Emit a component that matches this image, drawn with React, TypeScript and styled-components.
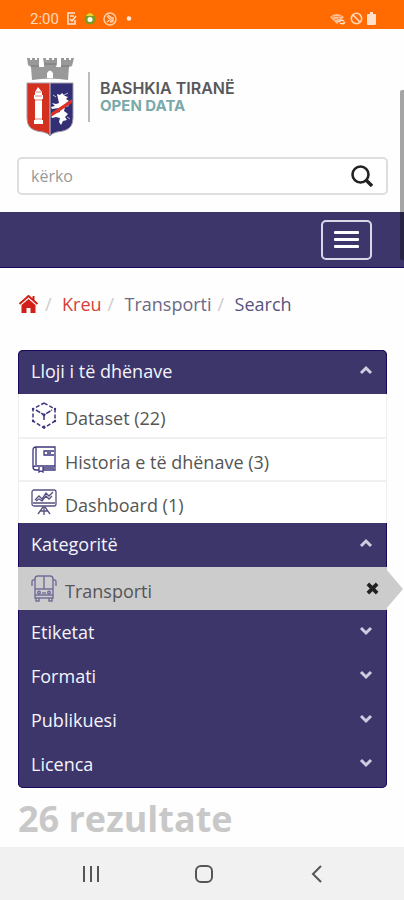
import React from "react";
import styled, { createGlobalStyle } from "styled-components";

const navy = "#3c366b";
const edge = "#1b0a5c";

const GlobalStyle = createGlobalStyle`
  *, *::before, *::after { box-sizing: border-box; }
  body {
    margin: 0;
    background: #fefefe;
    color: #555;
    font-family: "Open Sans", "Noto Sans", sans-serif;
  }
  button { font: inherit; cursor: pointer; }
  svg { display: block; flex: none; }
`;

const Page = styled.div`
  position: relative;
  display: flex;
  flex-direction: column;
  min-height: 100vh;
`;

const StatusBar = styled.div`
  display: flex;
  align-items: center;
  justify-content: space-between;
  height: 29px;
  padding: 8px 28px 0 30px;
  background: #ff6b00;
  color: #ffd9bd;
  font: 15px/20px Roboto, sans-serif;
`;

const StatusGroup = styled.div<{ $gap: number }>`
  display: flex;
  align-items: center;
  gap: ${(p) => p.$gap}px;
`;

const ScrollThumb = styled.div`
  position: absolute;
  top: 90px;
  right: 0;
  width: 4px;
  height: 170px;
  border-radius: 2px 0 0 2px;
  background: rgba(0, 0, 0, 0.35);
`;

const Header = styled.header`
  padding: 27px 16px 17px 17px;
`;

const Brand = styled.a`
  display: flex;
  align-items: center;
  width: max-content;
  margin-bottom: 21px;
  padding-left: 9px;
  text-decoration: none;
`;

const BrandText = styled.span`
  display: flex;
  flex-direction: column;
  justify-content: center;
  height: 50px;
  margin: 2px 0 0 14px;
  padding-left: 10px;
  border-left: 2px solid #bcbcbe;
  font: 600 16px/18px Inter, sans-serif;
  color: #58585a;
`;

const BrandSub = styled.span`
  font-size: 15px;
  font-weight: 700;
  color: #79a9a8;
`;

const SearchForm = styled.form`
  display: flex;
  align-items: center;
  height: 38px;
  padding: 0 13px 0 12px;
  border: 2px solid #dedede;
  border-radius: 5px;
  background: #fff;
`;

const SearchInput = styled.input`
  flex: 1;
  min-width: 0;
  padding: 0;
  border: 0;
  outline: 0;
  background: none;
  color: #555;
  font: 16px/20px "Open Sans", "Noto Sans", sans-serif;
  &::placeholder { color: #999; opacity: 1; }
`;

const IconButton = styled.button`
  display: flex;
  align-items: center;
  justify-content: center;
  padding: 0;
  border: 0;
  background: none;
  color: #222;
`;

const NavBar = styled.nav`
  display: flex;
  align-items: center;
  justify-content: flex-end;
  height: 56px;
  padding-right: 32px;
  background: ${navy};
  border-bottom: 1px solid ${edge};
`;

const MenuButton = styled.button`
  display: flex;
  flex-direction: column;
  align-items: center;
  justify-content: center;
  gap: 4px;
  width: 51px;
  height: 40px;
  padding: 0;
  border: 2px solid #d9d7e8;
  border-radius: 5px;
  background: none;
`;

const MenuLine = styled.span`
  width: 25px;
  height: 3px;
  border-radius: 1px;
  background: #fff;
`;

const Main = styled.main`
  flex: 1;
  padding: 22px 17px 0 18px;
`;

const Crumbs = styled.ol`
  display: flex;
  align-items: center;
  margin: 0 0 32px;
  padding: 0;
  list-style: none;
  font-size: 18px;
  line-height: 28px;
`;

const Crumb = styled.li`
  display: flex;
  align-items: center;
  & + &::before {
    content: "/";
    width: 17px;
    margin-left: 6px;
    color: #ccc;
  }
`;

const CrumbLink = styled.a<{ $tone: string }>`
  color: ${(p) => p.$tone};
  text-decoration: none;
`;

const Panel = styled.div`
  padding-bottom: 2px;
  border-radius: 5px;
  background: ${navy};
  box-shadow: inset 0 0 0 1px ${edge};
`;

const FacetButton = styled.button`
  display: flex;
  align-items: center;
  justify-content: space-between;
  width: 100%;
  height: 44px;
  padding: 0 14px 0 13px;
  border: 0;
  background: none;
  color: #f5f4fb;
  font-size: 18px;
  line-height: 24px;
  text-align: left;
  &[aria-expanded="true"] { padding-bottom: 2px; }
  svg { margin-bottom: 2px; }
`;

const FacetList = styled.ul`
  margin: 0;
  padding: 0;
  list-style: none;
`;

const FacetItem = styled.li<{ $active?: boolean }>`
  position: relative;
  display: flex;
  align-items: center;
  justify-content: space-between;
  height: 43px;
  padding: 0 7px 0 12px;
  background: ${(p) => (p.$active ? "#ccc" : "#fff")};
  border-left: 1px solid ${(p) => (p.$active ? "#ccc" : "#eee")};
  border-right: 1px solid ${(p) => (p.$active ? "#ccc" : "#eee")};
  & + & { border-top: 2px solid #f0f0f0; }
  &::after {
    content: "";
    display: ${(p) => (p.$active ? "block" : "none")};
    position: absolute;
    top: 2px;
    left: 100%;
    border: 20px solid transparent;
    border-left: 17px solid #ccc;
    border-right: 0;
  }
`;

const FacetLink = styled.a`
  display: flex;
  align-items: center;
  gap: 8px;
  padding-top: 4px;
  color: #555;
  font-size: 18px;
  line-height: 26px;
  text-decoration: none;
  svg { margin-bottom: 4px; }
`;

const Results = styled.h1`
  margin: 6px 0 0;
  color: #c8c8c8;
  font-size: 36px;
  line-height: 50px;
  font-weight: 700;
`;

const SystemNav = styled.nav`
  display: grid;
  grid-template-columns: repeat(3, 1fr);
  height: 53px;
  padding: 0 30px 0 34px;
  background: #f1f1f1;
`;

function Crest() {
  return (
    <svg width="48" height="80" viewBox="0 0 48 80" aria-hidden="true">
      <path d="M1 2h3v2h2V2h3v2h2V2h2v9h5V8L17 2h3v2h3V2h3v2h2V2h3v6l-1 3h5V2h3v2h2V2h3v2h2V2h3l-2 8-3 1-1 13q-18-3-36 0L5 11 2 9Z" fill="#999" />
      <path d="M5 10h8m22 0h8M18 8h12" stroke="#777" strokeWidth="1" />
      <path d="M21 22v-5q3-5 6 0v5Z" fill="#fff" />
      <path d="M1 27h23v53q-2-3-7-4-11-1-14-6-2-3-2-8Z" fill="#d3301f" />
      <path d="M24 27h23v35q0 5-2 8-3 5-14 6-5 1-7 4Z" fill="#332f75" />
      <path d="M1 27h46v35q0 5-2 8-3 5-14 6-5 1-7 4-2-3-7-4-11-1-14-6-2-3-2-8Z" fill="none" stroke="#a69aa9" />
      <path d="M24 27v52" stroke="#ccc" />
      <path d="m12 31 4 5v3h1v4h-1v21h1v4H8v-4h1V43H8v-4h1v-3Z" fill="#fff" />
      <path d="M10 36h5M9 40h7M9 44h7M9 63h7" stroke="#d98478" />
      <path d="m31 38 3 1 2-2 3 3 3 1-2 2 3 2-3 2 3 3-4 1-1 4 4 3-3 3 2 3-4 1-2 4-2-3 1-4-4-1-4 1-1-2 5-3 4-1-1-4-7 1-1-2 4-1-3-3 4 1 3-1Z" fill="#fff" />
      <path d="m25 57 21-14v4L25 61Z" fill="#dd3026" />
      <path d="m27 39 3 2M38 39l4-2M41 61l3 2" stroke="#b8bdd8" />
    </svg>
  );
}

function NoteIcon() {
  return (
    <svg width="11" height="13" viewBox="0 0 11 13" fill="none" stroke="#ffe0ca" strokeWidth="1.6" aria-hidden="true">
      <path d="M9 1H2v11h7V8M4 4h4M4 7l2 2 4-5" />
    </svg>
  );
}

function AppDotIcon() {
  return (
    <svg width="12" height="14" viewBox="0 0 12 14" aria-hidden="true">
      <circle cx="6" cy="7" r="5.5" fill="#7b9c20" />
      <path d="M2 4q4-6 8 0Z" fill="#e7d22b" />
      <circle cx="6" cy="7.5" r="2.5" fill="#fff" />
    </svg>
  );
}

function BadgeIcon() {
  return (
    <svg width="14" height="14" viewBox="0 0 14 14" fill="none" stroke="#ffd0ad" strokeWidth="1.4" aria-hidden="true">
      <circle cx="7" cy="7" r="6" />
      <path d="m4 4 6 6M5 3l4 3-5 4M10 5v4l-3 1" />
    </svg>
  );
}

function StatusDot() {
  return (
    <svg width="9" height="5" viewBox="0 0 9 5" aria-hidden="true">
      <circle cx="5" cy="2.5" r="2.3" fill="#ffe8d8" />
    </svg>
  );
}

function WifiIcon() {
  return (
    <svg width="16" height="12" viewBox="0 0 16 12" aria-hidden="true">
      <path d="M0 4q7-6 14 0l-7 7Z" fill="#ffc199" />
      <path d="m2 4 10-1M4 7l6-2" stroke="#ff8735" />
      <path d="M9 9q2-3 5-1m1 1q-2 3-5 1" fill="none" stroke="#ffe0ca" strokeWidth="1.5" />
    </svg>
  );
}

function BlockIcon() {
  return (
    <svg width="13" height="13" viewBox="0 0 13 13" fill="none" stroke="#ffd6b8" strokeWidth="1.6" aria-hidden="true">
      <circle cx="6.5" cy="6.5" r="5.2" />
      <path d="m3 3 7 7" />
    </svg>
  );
}

function BatteryIcon() {
  return (
    <svg width="9" height="13" viewBox="0 0 9 13" fill="#ffe0ca" aria-hidden="true">
      <path d="M3 0h3v2h2q1 0 1 1v9q0 1-1 1H1q-1 0-1-1V3q0-1 1-1h2Z" />
    </svg>
  );
}

function SearchIcon() {
  return (
    <svg width="22" height="22" viewBox="0 0 22 22" fill="none" stroke="#222" aria-hidden="true">
      <circle cx="9.5" cy="9.5" r="8" strokeWidth="2.6" />
      <path d="m15 15 6 6" strokeWidth="3.4" />
    </svg>
  );
}

function HomeIcon() {
  return (
    <svg width="21" height="18" viewBox="0 0 20 18" aria-hidden="true">
      <path d="m1 9 9-8 9 8M15 1v5" fill="none" stroke="#d21f17" strokeWidth="2" />
      <path d="m3 10 7-6 7 6v8h-5v-5H8v5H3Z" fill="#d21f17" />
    </svg>
  );
}

function Chevron({ up }: { up?: boolean }) {
  return (
    <svg width="14" height="10" viewBox="0 0 14 10" fill="none" stroke="#cfccdf" strokeWidth="3" aria-hidden="true">
      <path d={up ? "m2 8 5-5 5 5" : "m2 2 5 5 5-5"} />
    </svg>
  );
}

function CubeIcon() {
  return (
    <svg width="26" height="27" viewBox="0 0 26 27" fill="none" stroke="#3c367d" strokeWidth="1.5" aria-hidden="true">
      <path d="m13 1 11 6v12l-11 7-11-7V7Z" strokeDasharray="4 2" />
      <path d="m5 8 8 5 8-5M13 13v6" strokeDasharray="5 1" />
      <g fill="#3c367d" stroke="none">
        <circle cx="2" cy="7" r="1.2" />
        <circle cx="24" cy="7" r="1.2" />
        <circle cx="13" cy="13" r="1.4" />
        <circle cx="2" cy="19" r="1.2" />
        <circle cx="24" cy="19" r="1.2" />
        <circle cx="13" cy="25" r="1.4" />
      </g>
    </svg>
  );
}

function BookIcon() {
  return (
    <svg width="26" height="27" viewBox="0 0 26 27" fill="none" stroke="#3c367d" strokeWidth="1.3" aria-hidden="true">
      <path d="M24 20V1H5Q2 1 2 4v17q0 3 3 3h3M24 20H5q-3 0-3 2M5 1v18M24 20v4H12" />
      <path d="M23 5H13v4h10M16 7h4M8 21v5l2-1 2 1v-5M12 22h11" />
    </svg>
  );
}

function BoardIcon() {
  return (
    <svg width="26" height="27" viewBox="0 0 26 27" fill="none" stroke="#55517f" strokeWidth="1.3" aria-hidden="true">
      <rect x="1" y="1" width="24" height="16" rx="2" />
      <path d="M2 14h22M13 17v9M12 18l-5 7M14 18l5 7M9 22h8" />
      <path d="m4 11 4-4 3 3 4-6 3 3 4-4M5 12l3-2 3 2 4-5 3 3 3-3" />
    </svg>
  );
}

function BusIcon() {
  return (
    <svg width="26" height="27" viewBox="0 0 26 27" fill="none" stroke="#716d98" strokeWidth="1.4" aria-hidden="true">
      <path d="M4 4q0-3 3-3h12q3 0 3 3v19H4ZM4 14h18M13 1v13M4 20h18" />
      <path d="M4 5H2Q1 5 1 7v4M22 5h2q1 0 1 2v4M5 23v3h3v-3M18 23v3h3v-3" />
      <circle cx="8" cy="17.5" r="1.3" />
      <circle cx="18" cy="17.5" r="1.3" />
      <path d="M11 18h4" />
    </svg>
  );
}

function CloseIcon() {
  return (
    <svg width="13" height="13" viewBox="0 0 14 14" stroke="#222" strokeWidth="4" aria-hidden="true">
      <path d="m2 2 10 10M12 2 2 12" />
    </svg>
  );
}

function RecentsIcon() {
  return (
    <svg width="18" height="18" viewBox="0 0 18 18" stroke="#555" strokeWidth="2" aria-hidden="true">
      <path d="M2 1v16M9 1v16M16 1v16" />
    </svg>
  );
}

function SystemHomeIcon() {
  return (
    <svg width="20" height="20" viewBox="0 0 20 20" fill="none" stroke="#555" strokeWidth="2" aria-hidden="true">
      <rect x="2" y="2" width="16" height="16" rx="5" />
    </svg>
  );
}

function BackIcon() {
  return (
    <svg width="12" height="18" viewBox="0 0 12 18" fill="none" stroke="#555" strokeWidth="2" aria-hidden="true">
      <path d="M10 1 2 9l8 8" />
    </svg>
  );
}

const RemoveButton = styled(IconButton)`
  width: 13px;
  margin-right: 0;
`;

const dataTypes = [
  { label: "Dataset (22)", icon: <CubeIcon /> },
  { label: "Historia e të dhënave (3)", icon: <BookIcon /> },
  { label: "Dashboard (1)", icon: <BoardIcon /> },
];

const closedFacets = ["Etiketat", "Formati", "Publikuesi", "Licenca"];

function Facet({ title, open, children }: { title: string; open?: boolean; children?: React.ReactNode }) {
  return (
    <section>
      <FacetButton type="button" aria-expanded={!!open}>
        {title}
        <Chevron up={open} />
      </FacetButton>
      {children && <FacetList>{children}</FacetList>}
    </section>
  );
}

export default function App() {
  return (
    <>
      <GlobalStyle />
      <Page>
        <StatusBar>
          <StatusGroup $gap={7}>
            <span>2:00</span>
            <NoteIcon />
            <AppDotIcon />
            <BadgeIcon />
            <StatusDot />
          </StatusGroup>
          <StatusGroup $gap={4}>
            <WifiIcon />
            <BlockIcon />
            <BatteryIcon />
          </StatusGroup>
        </StatusBar>
        <Header>
          <Brand href="#">
            <Crest />
            <BrandText>
              BASHKIA TIRANË
              <BrandSub>OPEN DATA</BrandSub>
            </BrandText>
          </Brand>
          <SearchForm role="search" onSubmit={(e) => e.preventDefault()}>
            <SearchInput type="text" placeholder="kërko" aria-label="kërko" />
            <IconButton type="submit" aria-label="Kërko">
              <SearchIcon />
            </IconButton>
          </SearchForm>
        </Header>
        <NavBar>
          <MenuButton type="button" aria-label="Menu">
            <MenuLine />
            <MenuLine />
            <MenuLine />
          </MenuButton>
        </NavBar>
        <Main>
          <Crumbs>
            <Crumb>
              <CrumbLink href="#" $tone="#d21f17" aria-label="Home">
                <HomeIcon />
              </CrumbLink>
            </Crumb>
            <Crumb>
              <CrumbLink href="#" $tone="#d6403a">Kreu</CrumbLink>
            </Crumb>
            <Crumb>
              <CrumbLink href="#" $tone="#6c6986">Transporti</CrumbLink>
            </Crumb>
            <Crumb>
              <CrumbLink href="#" $tone="#58537f">Search</CrumbLink>
            </Crumb>
          </Crumbs>
          <Panel>
            <Facet title="Lloji i të dhënave" open>
              {dataTypes.map((item) => (
                <FacetItem key={item.label}>
                  <FacetLink href="#">
                    {item.icon}
                    {item.label}
                  </FacetLink>
                </FacetItem>
              ))}
            </Facet>
            <Facet title="Kategoritë" open>
              <FacetItem $active>
                <FacetLink href="#">
                  <BusIcon />
                  Transporti
                </FacetLink>
                <RemoveButton type="button" aria-label="Hiq Transporti">
                  <CloseIcon />
                </RemoveButton>
              </FacetItem>
            </Facet>
            {closedFacets.map((title) => (
              <Facet key={title} title={title} />
            ))}
          </Panel>
          <Results>26 rezultate</Results>
        </Main>
        <SystemNav>
          <IconButton type="button" aria-label="Recents">
            <RecentsIcon />
          </IconButton>
          <IconButton type="button" aria-label="Home screen">
            <SystemHomeIcon />
          </IconButton>
          <IconButton type="button" aria-label="Back">
            <BackIcon />
          </IconButton>
        </SystemNav>
        <ScrollThumb />
      </Page>
    </>
  );
}
